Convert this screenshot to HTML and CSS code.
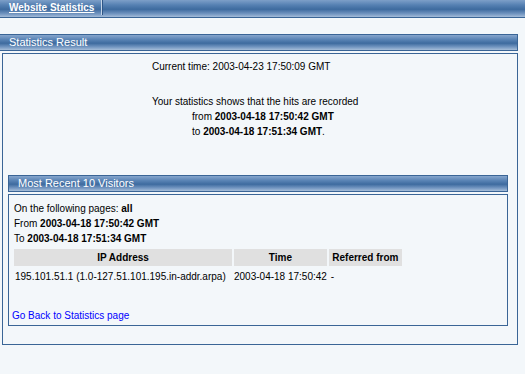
FILE: index.html
```html
<!DOCTYPE html>
<html lang="en">
<head>
    <meta charset="UTF-8">
    <title>Website Statistics</title>
    <link rel="stylesheet" href="styles.css">
</head>
<body>
    <div class="topbar">
        <div class="tab"><a href="#">Website Statistics</a></div>
    </div>

    <div class="section">
        <div class="bar">Statistics Result</div>
        <div class="panel">
            <div class="summary">
                <p class="now">Current time: 2003-04-23 17:50:09 GMT</p>
                <p>Your statistics shows that the hits are recorded</p>
                <p class="indent">from <b>2003-04-18 17:50:42 GMT</b></p>
                <p class="indent">to <b>2003-04-18 17:51:34 GMT</b>.</p>
            </div>

            <div class="subsection">
                <div class="bar">Most Recent 10 Visitors</div>
                <div class="panel inner">
                    <p class="line">On the following pages: <b>all</b></p>
                    <p class="line">From <b>2003-04-18 17:50:42 GMT</b></p>
                    <p class="line">To <b>2003-04-18 17:51:34 GMT</b></p>
                    <table class="visitors">
                        <tr>
                            <th class="col-ip">IP Address</th>
                            <th class="col-time">Time</th>
                            <th class="col-ref">Referred from</th>
                        </tr>
                        <tr>
                            <td class="ip">195.101.51.1 (1.0-127.51.101.195.in-addr.arpa)</td>
                            <td>2003-04-18 17:50:42</td>
                            <td class="ref">-</td>
                        </tr>
                    </table>
                    <a class="back" href="#">Go Back to Statistics page</a>
                </div>
            </div>
        </div>
    </div>
</body>
</html>
```

FILE: styles.css
```css
body {
    margin: 0;
    background-color: #f3f7fa;
    font-family: 'Liberation Sans', Arial, sans-serif;
    font-size: 10px;
    line-height: 15px;
    color: #000;
}
p {
    margin: 0;
}
.topbar {
    height: 17px;
    border-bottom: 1px solid #3a6596;
    background: linear-gradient(to bottom, #7d9fc8 0%, #5580b2 30%, #3e6b9f 55%, #6f93bf 80%, #a3bbd8 100%);
}
.tab {
    width: 92px;
    height: 15px;
    padding-left: 9px;
    border-right: 1px solid #c5d5e8;
    box-shadow: 1px 0 0 #2e5687;
    line-height: 15px;
    white-space: nowrap;
}
.tab a {
    color: #fff;
    font-size: 10px;
    font-weight: bold;
    text-decoration: underline;
}
.section {
    margin-top: 16px;
    width: 518px;
}
.bar {
    height: 15px;
    border: 1px solid #3a6596;
    border-left: none;
    padding-left: 9px;
    color: #fff;
    font-size: 11px;
    line-height: 15px;
    background: linear-gradient(to bottom, #86a6cd 0%, #5a84b5 30%, #3e6b9f 55%, #7396c1 80%, #a6bed9 100%);
}
.panel {
    margin: 2px 0 0 2px;
    height: 290px;
    border: 1px solid #3a6596;
}
.summary {
    width: 216px;
    margin: 0 auto;
    padding-top: 5px;
    white-space: nowrap;
}
.summary .now {
    margin-bottom: 20px;
}
.indent {
    padding-left: 40px;
}
.subsection {
    margin: 36px 0 0 5px;
    width: 500px;
}
.subsection .bar {
    border-left: 1px solid #3a6596;
}
.panel.inner {
    margin: 2px 0 0 0;
    height: auto;
    padding: 6px 0 2px 3px;
}
.line {
    padding-left: 2px;
}
.visitors {
    border-spacing: 2px;
    margin-top: 1px;
    white-space: nowrap;
}
.visitors th,
.visitors td {
    box-sizing: border-box;
}
.visitors th {
    height: 17px;
    padding: 0;
    background-color: #e0e0e0;
    font-weight: bold;
    text-align: center;
}
.visitors td {
    padding: 0;
    height: 17px;
    vertical-align: middle;
}
.visitors .ip {
    padding-left: 1px;
}
.visitors .ref {
    padding-left: 2px;
}
.col-ip {
    width: 218px;
}
.col-time {
    width: 91px;
}
.col-ref {
    width: 73px;
}
.back {
    display: block;
    margin-top: 21px;
    color: #0000ff;
    text-decoration: none;
}
```
